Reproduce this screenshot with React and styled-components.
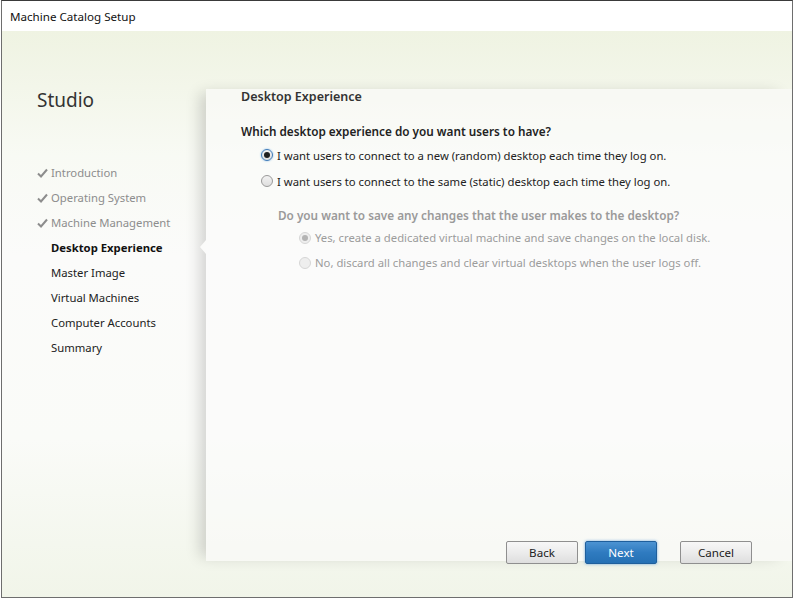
import React from 'react'
import styled, { createGlobalStyle } from 'styled-components'

const Global = createGlobalStyle`
html, body {
  margin: 0;
  padding: 0;
  background: #ffffff;
}
body {
  font-family: "Noto Sans", "Open Sans", sans-serif;
  font-size: 11.3px;
  color: #222;
}
`

const Window = styled.div`
width: 792px;
height: 598px;
margin-left: 1px;
box-sizing: border-box;
border: 1px solid #6e6e6e;
border-top-color: #3a3a3a;
display: flex;
flex-direction: column;
background: #fff;
overflow: hidden;
`

const TitleBar = styled.div`
height: 30px;
flex-shrink: 0;
background: #ffffff;
display: flex;
align-items: center;
padding-left: 8px;
font-size: 11.6px;
color: #111;
`

const Body = styled.div`
flex: 1;
display: flex;
background: linear-gradient(180deg, #eff3e2 0%, #f3f6ea 10%, #f8faf4 22%, #fbfbfa 40%, #fafbf8 72%, #f1f5e9 100%);
`

const Sidebar = styled.div`
width: 204px;
flex-shrink: 0;
padding: 56px 0 0 35px;
box-sizing: border-box;
`

const Brand = styled.div`
font-size: 19px;
color: #333;
margin-bottom: 47px;
`

const Steps = styled.ul`
list-style: none;
margin: 0;
padding: 0;
display: flex;
flex-direction: column;
`

const Step = styled.li`
height: 25px;
display: flex;
align-items: center;
font-size: 11.3px;
color: ${p => (p.$done ? '#8d8d8d' : '#222')};
font-weight: ${p => (p.$current ? 700 : 400)};
${p => p.$current && 'color: #111;'}
`

const CheckSlot = styled.span`
width: 14px;
display: inline-flex;
align-items: center;
`

const Main = styled.div`
flex: 1;
display: flex;
flex-direction: column;
padding: 58px 0 36px 0;
`

const Panel = styled.div`
position: relative;
flex: 1;
display: flex;
flex-direction: column;
background: rgba(252, 252, 251, 0.55);
box-shadow: -10px 0 14px -4px rgba(0, 0, 0, 0.16);
padding: 0 0 0 35px;
`

const Notch = styled.span`
position: absolute;
left: -6px;
top: 151px;
width: 0;
height: 0;
border-top: 7px solid transparent;
border-bottom: 7px solid transparent;
border-right: 6px solid #fbfbfa;
`

const Heading = styled.div`
font-size: 12.5px;
font-weight: 600;
color: #333;
margin-top: -1px;
margin-bottom: 18px;
`

const Question = styled.div`
font-size: 11.75px;
font-weight: 600;
color: ${p => (p.$disabled ? '#9a9a9a' : '#222')};
margin-bottom: ${p => (p.$disabled ? 2 : 3)}px;
`

const Options = styled.div`
display: flex;
flex-direction: column;
padding-left: ${p => p.$indent}px;
`

const Option = styled.label`
height: ${p => (p.$disabled ? 25 : 26)}px;
display: flex;
align-items: center;
gap: 4px;
font-size: 11.3px;
color: ${p => (p.$disabled ? '#9c9c9c' : '#222')};
`

const Radio = styled.span`
width: 12px;
height: 12px;
flex-shrink: 0;
border-radius: 50%;
box-sizing: border-box;
border: 1px solid ${p => (p.$disabled ? '#d6d6d6' : p.$checked ? '#3d7ab8' : '#9a9a9a')};
background: ${p => (p.$disabled ? '#eeeeee' : 'linear-gradient(180deg, #f2f2f2, #dedede)')};
display: inline-flex;
align-items: center;
justify-content: center;
box-shadow: ${p => (p.$checked && !p.$disabled ? '0 0 2px #7fb3e3' : 'none')};
&::after {
  content: '';
  display: ${p => (p.$checked ? 'block' : 'none')};
  width: 6px;
  height: 6px;
  border-radius: 50%;
  background: ${p => (p.$disabled ? '#b3b3b3' : '#1e1e1e')};
}
`

const SubBlock = styled.div`
padding-left: 37px;
margin-top: 13px;
`

const Spacer = styled.div`
flex: 1;
`

const Footer = styled.div`
display: flex;
justify-content: flex-end;
padding-right: 40px;
gap: 7px;
margin-bottom: -3px;
`

const Button = styled.button`
width: 72px;
height: 23px;
font-family: inherit;
font-size: 11.6px;
border-radius: 2px;
cursor: pointer;
margin-left: ${p => p.$gap || 0}px;
color: ${p => (p.$primary ? '#ffffff' : '#222')};
border: 1px solid ${p => (p.$primary ? '#1f5f9c' : '#8f8f8f')};
background: ${p =>
  p.$primary
    ? 'linear-gradient(180deg, #4c93d2 0%, #2f7bc0 50%, #2570b4 100%)'
    : 'linear-gradient(180deg, #f7f7f7 0%, #ececec 50%, #dedede 100%)'};
box-shadow: ${p => (p.$primary ? '0 0 3px #6fa8dc' : 'none')};
`

const Check = () => (
  <svg width="11" height="10" viewBox="0 0 11 10">
    <path d="M1 5.5 L4 8.5 L10 1.5" fill="none" stroke="#8d8d8d" strokeWidth="2" />
  </svg>
)

const steps = [
  { name: 'Introduction', done: true },
  { name: 'Operating System', done: true },
  { name: 'Machine Management', done: true },
  { name: 'Desktop Experience', current: true },
  { name: 'Master Image' },
  { name: 'Virtual Machines' },
  { name: 'Computer Accounts' },
  { name: 'Summary' },
]

const App = () => {
  return (
    <>
      <Global />
      <Window>
        <TitleBar>Machine Catalog Setup</TitleBar>
        <Body>
          <Sidebar>
            <Brand>Studio</Brand>
            <Steps>
              {steps.map(s => (
                <Step key={s.name} $done={s.done} $current={s.current}>
                  <CheckSlot>{s.done && <Check />}</CheckSlot>
                  {s.name}
                </Step>
              ))}
            </Steps>
          </Sidebar>
          <Main>
            <Panel>
              <Notch />
              <Heading>Desktop Experience</Heading>
              <Question>Which desktop experience do you want users to have?</Question>
              <Options $indent={20}>
                <Option>
                  <Radio $checked />
                  I want users to connect to a new (random) desktop each time they log on.
                </Option>
                <Option>
                  <Radio />
                  I want users to connect to the same (static) desktop each time they log on.
                </Option>
              </Options>
              <SubBlock>
                <Question $disabled>Do you want to save any changes that the user makes to the desktop?</Question>
                <Options $indent={21}>
                  <Option $disabled>
                    <Radio $checked $disabled />
                    Yes, create a dedicated virtual machine and save changes on the local disk.
                  </Option>
                  <Option $disabled>
                    <Radio $disabled />
                    No, discard all changes and clear virtual desktops when the user logs off.
                  </Option>
                </Options>
              </SubBlock>
              <Spacer />
              <Footer>
                <Button>Back</Button>
                <Button $primary>Next</Button>
                <Button $gap={16}>Cancel</Button>
              </Footer>
            </Panel>
          </Main>
        </Body>
      </Window>
    </>
  )
}

export default App
